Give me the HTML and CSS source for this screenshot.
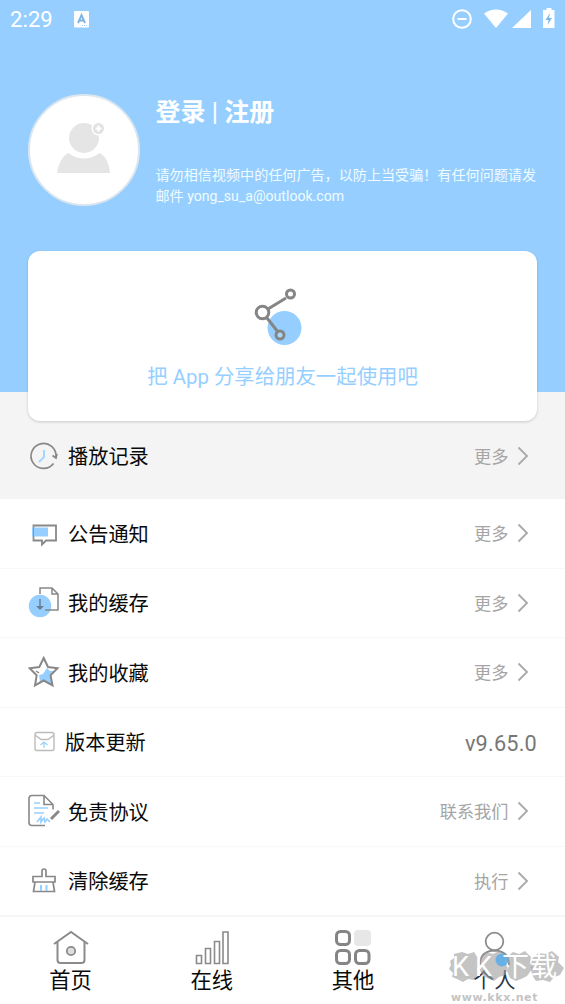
FILE: index.html
```html
<!DOCTYPE html>
<html lang="zh-CN">
<head>
<meta charset="utf-8">
<title>个人</title>
<link rel="stylesheet" href="styles.css">
</head>
<body>
<div class="app">
  <header class="hero">
    <div class="status">
      <span class="clock">2:29</span>
      <svg class="badge-a" width="15" height="17" viewBox="0 0 15 17"><rect width="15" height="16.500" rx="1" fill="#fff"/><path d="M4 12 7.500 4 11 12M5.300 9.500h4.400" fill="none" stroke="#7fb4e0" stroke-width="1.900"/><path d="M8 14.500h6" stroke="#96cfff" stroke-dasharray="1 1"/></svg>
      <svg class="signals" width="105" height="22" viewBox="0 0 105 22">
        <circle cx="11" cy="11" r="8.800" fill="none" stroke="#fff" stroke-width="2"/><path d="M6.500 11h9" stroke="#fff" stroke-width="2"/>
        <path d="M33 5.500Q45 -2.500 57 5.500L45 20Z" fill="#fff"/>
        <path d="M80 2v18H61Z" fill="#fff"/>
        <path d="M95.500 0h5v2h3v18H92V2h3.500z" fill="#fff"/><path d="m99 5-4.500 7h3l-1 5 4.500-7h-3z" fill="#7fb8e8"/>
      </svg>
    </div>
    <div class="profile">
      <div class="avatar">
        <svg width="108" height="108" viewBox="0 0 108 108"><circle cx="54" cy="42" r="15" fill="#e5e5e5"/><path d="M27 77q2-14 11-20 16 11 32 0 9 6 10 20z" fill="#e5e5e5"/><circle cx="68.500" cy="32.500" r="7" fill="#fff"/><circle cx="68.500" cy="32.500" r="5.500" fill="#e2e2e2"/><path d="M65.500 32.500h6M68.500 29.500v6" stroke="#fff" stroke-width="2.200"/></svg>
      </div>
      <div class="intro">
        <h1 class="login">登录 <span class="bar">|</span> 注册</h1>
        <p class="notice">请勿相信视频中的任何广告，以防上当受骗！有任何问题请发邮件 yong_su_a@outlook.com</p>
      </div>
    </div>
    <section class="share">
      <svg width="50" height="60" viewBox="0 0 50 60"><circle cx="32.500" cy="41" r="17" fill="#96cfff"/><g fill="none" stroke="#858585" stroke-width="3"><path d="M16 22 34 11M15 31 26 45"/><circle cx="10.500" cy="25.500" r="6.300" fill="#fff"/><circle cx="38.500" cy="7" r="4" fill="#fff"/><circle cx="28" cy="48" r="4" fill="#a9d6fc"/></g></svg>
      <p class="share-text">把 App 分享给朋友一起使用吧</p>
    </section>
  </header>
  <main>
    <div class="row history">
      <svg class="icon" width="32" height="34" viewBox="0 0 32 34"><path d="M28 18A12.500 12.500 0 1 0 25.500 24.500M24.500 16.500l3.500 2.500 1-4" fill="none" stroke="#888" stroke-width="1.700"/><path d="M16 11v7l-5 5" fill="none" stroke="#a5d6ff" stroke-width="2"/></svg>
      <span class="label">播放记录</span><span class="more">更多</span><svg class="chev" width="12" height="20" viewBox="0 0 12 20"><path d="m1.500 1.500 8.500 8.500-8.500 8.500"/></svg>
    </div>
    <div class="row">
      <svg class="icon" width="32" height="34" viewBox="0 0 32 34"><path d="M5.500 9.500h22.500v15H18l-4 4v-4H5.500z" fill="#fff" stroke="#888" stroke-width="1.800"/><path d="M4 11.500h16v9H4z" fill="#96cfff"/><path d="M5.500 9.500v15" stroke="#799db9" stroke-width="1"/></svg>
      <span class="label">公告通知</span><span class="more">更多</span><svg class="chev" width="12" height="20" viewBox="0 0 12 20"><path d="m1.500 1.500 8.500 8.500-8.500 8.500"/></svg>
    </div>
    <div class="row">
      <svg class="icon" width="32" height="34" viewBox="0 0 32 34"><circle cx="12" cy="20" r="11.300" fill="#96cfff"/><path d="M12 8V2h12l6 6v16H17M24 2v6h6" fill="none" stroke="#888" stroke-width="1.500"/><path d="M12 13v9" stroke="#667f93" stroke-width="1.500"/><path d="M8 20h8l-4 4z" fill="#667f93"/></svg>
      <span class="label">我的缓存</span><span class="more">更多</span><svg class="chev" width="12" height="20" viewBox="0 0 12 20"><path d="m1.500 1.500 8.500 8.500-8.500 8.500"/></svg>
    </div>
    <div class="row">
      <svg class="icon" width="32" height="34" viewBox="0 0 32 34"><path d="m19 13 3 3h5l-5 5 2 9-8-4-4 1-1-7 4-1z" fill="#96cfff"/><path d="m15.700 3 4.300 9 9.500 1.300-7 7 2 10-8.800-4.800-8.700 4.800 1.700-10-7-7L11.300 12z" fill="none" stroke="#888" stroke-width="2"/><path d="m8 16 3 2" stroke="#888" stroke-width="1.500"/></svg>
      <span class="label">我的收藏</span><span class="more">更多</span><svg class="chev" width="12" height="20" viewBox="0 0 12 20"><path d="m1.500 1.500 8.500 8.500-8.500 8.500"/></svg>
    </div>
    <div class="row version">
      <svg class="icon" width="32" height="34" viewBox="0 0 32 34"><path d="M8 7.500h16q2 0 2 2v14q0 2-2 2H9q-2 0-2-2v-14q0-2 2-2M7 10l6 4.500h7l6-4.500" fill="none" stroke="#bbb" stroke-width="1.400"/><path d="m12.500 20 3.500-3 3.500 3M16 17v6" fill="none" stroke="#9bd1fb" stroke-width="1.300"/></svg>
      <span class="label">版本更新</span><span class="number">v9.65.0</span>
    </div>
    <div class="row">
      <svg class="icon" width="32" height="34" viewBox="0 0 32 34"><path d="M17 31.500H4q-3 0-3-3v-24q0-3 3-3h12l9 9v5M16 1.500v9h9" fill="none" stroke="#888" stroke-width="1.600"/><path d="M6 9h6M6 14h14M6 19h10M9 28l4-5v5l3-4 1 4 2-3 3 3" fill="none" stroke="#96cfff" stroke-width="1.600"/><path d="m23 25 8-8" stroke="#888" stroke-width="3"/></svg>
      <span class="label">免责协议</span><span class="more">联系我们</span><svg class="chev" width="12" height="20" viewBox="0 0 12 20"><path d="m1.500 1.500 8.500 8.500-8.500 8.500"/></svg>
    </div>
    <div class="row">
      <svg class="icon" width="32" height="34" viewBox="0 0 32 34"><path d="M5 12.500h9V7q0-2 2-2t2 2v5.500h9V18H5zM7 18 5.500 27.500h21L25 18" fill="none" stroke="#888" stroke-width="1.700"/><path d="M13 21v6M18.500 21v6" stroke="#96cfff" stroke-width="2"/></svg>
      <span class="label">清除缓存</span><span class="more">执行</span><svg class="chev" width="12" height="20" viewBox="0 0 12 20"><path d="m1.500 1.500 8.500 8.500-8.500 8.500"/></svg>
    </div>
  </main>
  <nav class="tabs">
    <div class="tab"><svg width="40" height="38" viewBox="0 0 40 38"><path d="M3 16 20 4l17 12M6.500 14v18q0 3 3 3h21q3 0 3-3V14" fill="none" stroke="#8b8b8b" stroke-width="2"/><circle cx="20" cy="23" r="4.200" fill="#ddd" stroke="#8b8b8b" stroke-width="1.800"/></svg><span>首页</span></div>
    <div class="tab"><svg width="40" height="38" viewBox="0 0 40 38"><path d="M4.500 27.500h5v8h-5zM13.500 20.500h5v15h-5zM22.500 13.500h5v22h-5zM31 4h5v31.500h-5z" fill="none" stroke="#8b8b8b" stroke-width="1.600"/></svg><span>在线</span></div>
    <div class="tab"><svg width="40" height="38" viewBox="0 0 40 38"><rect x="21" y="2" width="17" height="16" rx="4" fill="#e7e7e7"/><g fill="none" stroke="#858585" stroke-width="3"><rect x="3.500" y="3.500" width="13" height="13" rx="4"/><rect x="3.500" y="22.500" width="13" height="13" rx="4"/><rect x="22.500" y="22.500" width="13.500" height="13" rx="4"/></g></svg><span>其他</span></div>
    <div class="tab mine"><svg width="40" height="38" viewBox="0 0 40 38"><g fill="none" stroke="#8b8b8b" stroke-width="1.800"><circle cx="20.500" cy="13.500" r="8.800"/><path d="M6 37q0-14 14.500-14.500Q35 23 35 37"/></g></svg><span>个人</span></div>
    <div class="watermark">
      <svg width="117" height="34" viewBox="0 0 117 34"><g fill="#a0a0a0" fill-opacity=".62"><path d="m2 10 4-3V3l8-2 6 2 6-2 4 6 2 5-3 6 2 5-5 6-6-1-5 3-6-3-5-2 1-4-4-4 2-4z"/><path d="m32 7 6-6 7 2 6-3 7 6-1 6 3 5-3 7-6 2-5 4-7-3-5-3-3-7 2-4z"/><path d="m59 6 6-5 6 2 6-3 6 6-1 6 3 5-6 8-6 3-5 2-6-3-3-7 2-5z"/><path d="m84 8 6-6 7 1 7-3 7 6-1 5 6 6-4 7-6 2-4 5-7-2-7 1-4-6-1-7z"/></g><circle cx="54" cy="9" r="6.500" fill="#5caee9" fill-opacity=".9"/></svg>
      <span class="wm-name">KK<span class="wm-han">下载</span></span>
      <span class="wm-site">www.kkx.net</span>
    </div>
  </nav>
</div>
</body>
</html>
```
FILE: styles.css
```css
* { box-sizing: border-box; }
body { margin: 0; background: #fff; font-family: Roboto, "Noto Sans CJK SC", sans-serif; color: #0a0a0a; }
h1, p { margin: 0; }
svg { display: block; flex: none; }
.app { width: 565px; height: 1004px; overflow: hidden; }
.hero { height: 392px; background: #96cfff; color: #fff; }
.status { display: flex; align-items: center; height: 38px; padding: 0 9px 0 10px; }
.clock { font-size: 22px; line-height: 38px; width: 64px; padding-top: 1px; letter-spacing: .1px; }
.signals { margin-left: auto; }
.profile { display: flex; height: 213px; padding: 56px 28px 0; }
.avatar { width: 112px; height: 112px; border: 2px solid #dce6ee; border-radius: 50%; background: #fff; flex: none; }
.intro { margin-left: 15.500px; flex: 1; }
.login { padding-top: 1px; font-size: 25px; line-height: 36px; font-weight: 700; }
.bar { font-weight: 500; }
.notice { margin-top: 33.500px; margin-right: -4px; font-size: 14.1px; line-height: 21.5px; color: #f0fbff; }
.share { position: relative; display: flex; flex-direction: column; align-items: center; height: 170px; margin: 0 28px; padding-top: 36px; border-radius: 12px; background: #fff; box-shadow: 0 1px 3px #0000002e; }
.share svg { margin-right: 12px; }
.share-text { margin-top: 15px; font-size: 20.4px; line-height: 30px; color: #96cfff; white-space: nowrap; }
.row { display: flex; align-items: center; height: 69.500px; padding: 0 36px 0 28px; border-bottom: 1px solid #f8f8f8; }
.history { height: 107px; padding-top: 20px; border-bottom: 0; background: #f4f4f4; }
.icon { margin-right: 8px; }
.label { padding-top: 3px; font-size: 20.2px; line-height: 30px; }
.history .label { padding-top: 2px; }
.more { margin-left: auto; margin-right: 8.500px; padding-top: 2px; font-size: 17.2px; line-height: 26px; color: #a5a5a5; }
.chev path { fill: none; stroke: #aaa; stroke-width: 1.9; }
.version { padding-right: 28px; }
.version .icon { margin-right: 5px; }
.number { margin-left: auto; padding-top: 4px; font-size: 21.7px; color: #777; letter-spacing: .2px; }
.tabs { position: relative; display: flex; height: 89px; margin-top: -1px; border-top: 2px solid #f6f6f6; }
.tab { flex: 1; display: flex; flex-direction: column; align-items: center; padding-top: 11px; font-size: 21.3px; line-height: 30px; }
.mine span { color: #28344a; }
.watermark { position: absolute; left: 448px; top: 34px; width: 117px; height: 54px; }
.wm-name { position: absolute; left: 4px; top: -1px; font: 27px/34px Roboto, "Noto Sans CJK SC", sans-serif; letter-spacing: 6px; color: #fff; white-space: nowrap; }
.wm-han { margin-left: 4px; letter-spacing: 1px; }
.wm-site { position: absolute; left: 3px; top: 39px; font: bold 11px/16px "DejaVu Sans", sans-serif; letter-spacing: .6px; color: #c4c4c4; }
```
